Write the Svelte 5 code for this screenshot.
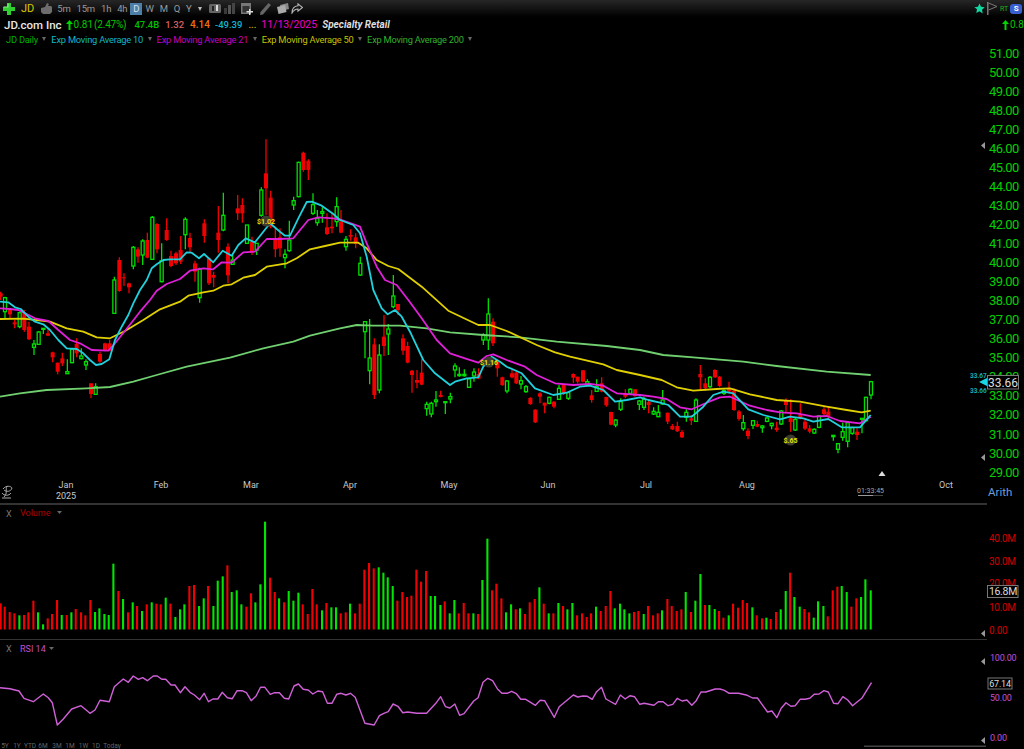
<script>
  const G = 'g';
  const R = 'r';

  // rows are read off enlarged crops: [x, colour, wickTop, bodyTop, bodyBottom, wickBottom]
  const candlesA = [
    [2,R,485,490,500,510],[15,G,500,503,545,565],[30,R,535,540,553,565],[44,R,570,577,583,595],[59,G,545,548,590,595],
    [73,R,540,548,600,605],[87,R,575,590,628,630],[102,G,630,642,652,675],[116,G,603,606,643,645],[130,G,595,595,598,612],
    [144,R,598,610,617,618],[158,R,665,667,682,697],[173,R,698,698,725,733],[187,R,668,685,700,708],[202,G,688,725,731,731],
    [216,G,655,658,698,700],[230,R,625,642,670,682],[244,G,655,678,686,688],[258,G,688,695,705,720],[273,R,760,760,792,805],
    [287,G,760,770,793,795],[300,R,665,672,695,698],[315,R,638,640,662,664],[329,R,630,640,662,664],[343,G,440,450,550,552],
    [358,R,382,390,483,485],[372,R,430,442,445,468],[387,R,458,460,472,490],[400,G,348,352,408,418],[414,R,352,358,380,398],
    [428,G,328,333,375,405],[442,R,308,330,383,385],[457,G,258,262,388,390],[471,R,280,282,358,370],[485,G,340,392,455,457],
    [500,R,265,300,330,332],[513,R,362,378,408,412],[528,R,365,370,400,405],[542,R,318,360,395,402],[556,G,262,268,314,358],
    [570,R,308,324,352,368],[585,R,392,400,425,455],[599,G,413,418,503,518],[613,R,268,280,318,338],[627,R,385,385,460,465],
    [641,R,425,435,443,472],[655,R,228,308,330,368],[670,G,188,256,300,304],[684,R,340,350,436,460],[698,G,375,390,403,405],
    [713,R,195,235,250,270],[727,R,205,225,250,278],[741,G,285,285,340,342],[756,R,320,335,368,375],[770,G,340,340,360,375],
    [784,G,172,180,256,260],[798,R,28,130,175,255],[812,R,182,203,290,295],[826,R,295,325,358,382],[840,R,295,322,355,380],
    [855,G,358,373,383,415],[868,G,272,330,362,365],[881,G,200,212,225,240],[896,G,95,97,200,202],[910,R,65,68,120,125],
    [925,R,88,92,120,150],[939,G,190,224,250,255],[952,G,240,265,278,287],[967,G,232,245,250,278],[981,R,250,292,312,315],
    [996,R,248,290,295,310],[1010,G,202,230,275,290]
  ];
  const candlesB = [
    [3,R,-30,5,38,40],[18,G,48,58,80,92],[32,R,28,45,50,62],[47,R,40,52,72,85],[61,G,110,130,165,168],
    [75,G,303,305,335,415],[89,G,297,414,452,493],[103,R,355,373,525,537],[118,G,373,405,510,520],[132,R,285,350,378,408],
    [145,G,312,327,342,405],[160,G,165,228,260,265],[174,R,252,252,270,285],[189,R,343,355,392,405],[203,R,365,378,428,430],
    [216,R,450,452,465,518],[231,R,450,480,488,505],[245,R,418,458,494,496],[260,G,545,553,566,587],[274,G,545,550,582,592],
    [288,G,513,540,545,560],[302,R,512,525,531,532],[316,G,545,545,548,582],[331,G,518,530,537,550],[345,G,430,438,450,472],
    [358,G,442,463,467,470],[373,G,448,463,467,470],[387,G,475,477,502,503],[402,G,445,456,468,485],[416,R,445,462,476,478],
    [430,G,340,345,360,375],[445,G,235,282,360,390],[459,R,295,305,370,378],[472,R,425,425,445,470],[487,R,470,472,495,497],
    [501,G,480,483,513,520],[516,R,450,460,472,475],[529,R,455,458,490,492],[543,G,468,482,492,508],[558,G,495,500,515,518],
    [571,R,532,534,552,554],[586,R,568,569,607,609],[600,R,517,520,530,550],[614,R,548,548,557,580],[628,G,530,532,550,553],
    [642,R,544,545,560,565],[657,G,495,505,538,540],[671,R,493,495,520,525],[685,G,515,518,535,540],[700,R,460,462,473,490],
    [713,R,470,470,485,490],[729,R,450,451,485,487],[742,G,478,485,495,497],[755,R,510,526,540,548],[770,G,478,500,514,516],
    [785,R,472,490,515,517],[799,R,530,531,556,560],[813,R,575,576,614,616],[827,G,598,600,615,622],[842,G,535,545,568,573],
    [856,R,508,520,530,535],[871,G,505,508,520,525],[885,R,508,508,528,530],[898,G,540,543,553,570]
  ];
  const candlesC = [
    [72,G,140,148,172,180],[86,R,150,156,165,190],[101,G,172,184,192,195],[115,G,165,187,200,202],[128,G,120,150,162,165],
    [143,R,188,188,215,222],[157,R,222,228,238,240],[172,R,215,228,244,246],[186,R,240,246,262,264],[199,G,178,187,202,215],
    [214,R,195,205,212,225],[228,G,145,150,214,216],[241,R,45,72,82,122],[256,R,85,100,115,122],[270,G,78,82,110,115],
    [285,R,58,60,82,84],[299,R,78,80,108,112],[312,G,118,122,130,135],[327,R,95,115,125,130],[342,R,115,122,180,182],
    [357,R,180,184,207,212],[370,G,195,218,236,242],[384,R,235,242,258,268],[399,G,212,212,226,237],[412,R,212,222,230,232],
    [427,G,225,228,233,248],[441,G,200,204,214,217],[455,G,218,220,227,238],[470,R,215,233,240,245],[484,G,180,183,222,225],
    [498,R,145,150,165,190],[512,R,148,205,216,245],[526,G,205,208,240,243],[541,R,160,195,205,208],[555,R,210,215,236,240],
    [569,R,225,235,245,250],[583,G,235,238,249,252],[597,G,195,198,232,235],[612,R,170,178,192,195],[625,R,170,185,200,205],
    [640,G,255,256,260,272],[654,G,280,281,298,310],[668,G,218,245,262,272],[683,G,218,218,274,292],[697,G,230,233,250,254],
    [711,R,235,245,255,270],[726,G,205,205,208,250],[738,G,140,142,212,215],[753,G,92,95,135,148]
  ];

  function mapCandles(rows, ox, oy) {
    return rows.map(([x, color, wt, bt, bb, wb]) => ({
      x: ox + x / 3,
      color,
      wt: oy + wt / 3,
      bt: oy + bt / 3,
      bb: oy + bb / 3,
      wb: oy + wb / 3
    }));
  }

  const candles = [
    ...mapCandles(candlesA, 0, 130),
    ...mapCandles(candlesB, 340, 220),
    ...mapCandles(candlesC, 620, 350)
  ];

  // moving averages, same three crops
  function toPoints(sections) {
    return sections
      .map(([ox, oy, pts]) => pts.map(([x, y]) => `${(ox + x / 3).toFixed(1)},${(oy + y / 3).toFixed(1)}`).join(' '))
      .join(' ');
  }

  const ema10 = toPoints([
    [0, 130, [[0,515],[25,517],[45,532],[62,537],[85,560],[105,575],[130,583],[150,600],[175,630],[200,655],[230,657],[250,670],[270,690],[288,705],[305,702],[328,688],[345,630],[365,590],[385,555],[400,520],[420,480],[440,450],[455,415],[470,403],[490,390],[510,388],[540,388],[560,367],[575,368],[597,385],[612,372],[640,397],[668,362],[695,377],[715,345],[737,325],[765,337],[790,305],[810,280],[840,305],[855,317],[870,317],[895,265],[920,216],[935,215],[965,227],[1000,252]]],
    [340, 220, [[0,0],[40,15],[60,40],[80,110],[100,210],[125,265],[143,283],[165,270],[185,290],[210,335],[250,420],[285,460],[330,495],[345,485],[380,475],[415,472],[430,440],[455,410],[480,425],[500,440],[545,460],[585,505],[640,525],[680,518],[720,500],[750,497],[790,510],[825,545],[860,540],[900,532]]],
    [620, 350, [[85,150],[120,158],[145,165],[180,200],[215,200],[250,170],[280,135],[310,125],[340,130],[385,178],[430,195],[480,208],[510,200],[550,205],[580,215],[625,207],[665,232],[720,232],[752,195]]]
  ]);
  const ema21 = toPoints([
    [0, 130, [[0,535],[30,537],[55,540],[80,552],[105,565],[145,573],[175,600],[210,630],[240,640],[275,660],[325,662],[345,640],[385,590],[420,545],[450,510],[470,482],[500,462],[540,447],[570,422],[610,415],[640,418],[665,397],[695,398],[730,367],[765,365],[800,327],[840,327],[880,325],[925,270],[955,262],[1000,265]]],
    [340, 220, [[5,0],[60,20],[80,70],[110,140],[135,180],[170,195],[205,240],[245,295],[290,360],[330,400],[375,415],[415,428],[440,408],[460,403],[500,420],[555,440],[590,465],[645,490],[700,495],[750,492],[790,497],[830,520],[900,525]]],
    [620, 350, [[100,140],[140,147],[180,172],[215,178],[260,158],[300,142],[330,140],[390,167],[440,180],[480,187],[530,190],[580,200],[620,198],[660,213],[720,220],[752,200]]]
  ]);
  const ema50 = toPoints([
    [0, 130, [[0,567],[70,566],[110,570],[150,575],[200,595],[250,605],[290,622],[330,625],[375,603],[430,570],[480,538],[540,515],[565,497],[610,487],[640,482],[670,467],[695,463],[730,443],[765,435],[800,410],[860,400],[890,385],[930,358],[975,348]]],
    [340, 220, [[0,68],[55,68],[80,85],[110,120],[145,138],[175,147],[245,200],[325,272],[415,315],[450,315],[500,333],[590,375],[645,397],[690,410],[790,433],[830,450],[900,465]]],
    [620, 350, [[125,90],[170,112],[220,122],[290,117],[330,115],[390,133],[470,150],[540,155],[620,170],[680,180],[725,187],[752,182]]]
  ]);
  const ema200 = toPoints([
    [0, 130, [[0,800],[60,790],[140,780],[260,775],[330,771],[400,755],[470,735],[560,710],[690,683],[790,655],[880,635],[930,617]]],
    [340, 220, [[0,325],[50,315],[100,317],[180,317],[260,325],[330,337],[430,345],[540,352],[650,365],[800,378],[900,390]]],
    [620, 350, [[130,15],[220,22],[370,35],[470,48],[620,65],[752,75]]]
  ]);

  const volRows = [
    [0, [[2,265,R],[14,275,R],[29,291,R],[43,295,R],[58,301,G],[72,300,R],[85,292,R],[100,257,R],[114,292,G],[129,328,G],[143,310,R],[156,297,R],[171,255,R],[185,300,G],[200,300,R],[214,292,G],[227,282,R],[243,292,R],[256,301,R],[271,255,R],[285,291,G],[298,280,G],[313,297,G],[326,300,G],[340,146,G],[355,228,R],[369,252,G],[384,292,R],[398,262,G],[411,273,R],[426,288,G],[440,268,R],[455,262,G],[469,266,R],[482,268,R],[497,248,G],[511,266,R],[526,306,G],[540,283,G],[553,268,G],[568,213,R],[582,210,R],[597,273,G],[611,250,G],[624,213,R],[640,273,G],[653,197,G],[668,184,G],[682,151,R],[695,231,G],[710,226,G],[724,268,G],[739,275,R],[753,235,R],[766,262,G],[781,208,G],[795,20,G],[810,188,R],[824,231,R],[837,250,G],[852,262,R],[866,228,G],[880,257,G],[895,233,G],[908,268,R],[923,297,R],[937,222,R],[950,268,R],[966,286,G],[979,264,R],[994,277,G],[1008,277,G],[1022,295,R],[1037,292,R],[1050,266,G],[1065,295,R],[1079,266,R],[1093,164,R],[1107,144,R],[1121,160,R],[1136,157,G],[1150,173,G],[1163,187,G],[1178,213,G],[1192,257,R],[1207,231,R],[1221,246,R],[1234,242,R],[1249,164,R],[1263,200,R],[1278,168,R],[1292,243,G],[1305,243,G]]],
    [440, [[1,270,G],[14,259,R],[29,295,G],[43,255,G],[56,295,R],[71,264,R],[85,295,R],[100,295,G],[114,297,R],[127,195,G],[142,71,G],[156,226,R],[169,206,R],[184,250,R],[198,292,G],[213,268,G],[227,283,R],[240,280,G],[255,297,R],[269,262,R],[284,252,R],[298,217,G],[311,266,R],[326,295,G],[340,295,R],[355,264,G],[369,273,R],[382,283,G],[397,264,G],[411,301,R],[426,295,R],[440,306,R],[453,295,R],[468,275,G],[482,288,R],[497,273,R],[511,228,R],[524,280,G],[540,266,G],[553,283,G],[568,295,G],[582,291,R],[595,288,R],[611,297,G],[624,273,R],[639,301,R],[653,295,R],[666,286,G],[682,252,R],[695,273,R],[710,288,R],[724,283,R],[737,231,G],[753,291,R],[766,257,G],[781,177,G],[795,270,R],[808,270,G],[824,282,G],[837,288,R],[850,308,R],[866,301,G],[879,266,R],[894,278,R],[908,255,R],[921,264,R],[937,277,G],[950,301,R],[966,310,R],[979,308,G],[992,312,R],[1008,291,R],[1022,283,G],[1037,228,G],[1050,173,R],[1063,246,G],[1079,275,G],[1093,282,R],[1107,292,R],[1121,308,G],[1134,259,G],[1150,273,G],[1163,304,R],[1178,226,R],[1192,215,R],[1205,213,G],[1220,231,G],[1234,275,R],[1249,250,R],[1263,246,G],[1276,193,G],[1292,226,G]]]
  ];
  const volumes = volRows.flatMap(([ox, rows]) =>
    rows.map(([x, top, color]) => ({ x: ox + x / 3, top: 515 + top / 3, color }))
  );

  const rsiHead = [[0,173],[30,176],[57,183],[72,205],[100,215],[130,192],[145,203],[157,218],[172,285],[190,267],[215,237],[243,227],[270,250],[285,240],[300,211],[328,215],[343,170],[370,147],[385,157],[400,138],[415,148],[428,143],[442,152],[460,138],[472,138],[485,148],[497,148],[513,165],[525,165],[541,188],[555,170]]
    .map(([x, y]) => `${(x / 3).toFixed(1)},${(630 + y / 3).toFixed(1)}`);
  const rsiTail = [[0,82],[10,90],[22,104],[32,85],[42,110],[52,102],[63,102],[73,82],[85,98],[96,101],[107,77],[118,77],[128,83],[139,107],[150,93],[160,67],[170,67],[182,88],[192,83],[203,83],[214,100],[224,102],[236,63],[246,57],[257,73],[268,75],[279,87],[290,78],[301,80],[312,115],[322,115],[333,88],[343,85],[354,90],[364,85],[375,97],[397,175],[418,180],[430,152],[440,145],[450,140],[461,117],[472,124],[483,143],[494,141],[515,145],[537,145],[558,115],[569,95],[580,125],[590,129],[601,117],[612,151],[622,146],[644,108],[654,98],[665,52],[676,40],[687,47],[698,72],[708,85],[720,85],[730,79],[741,86],[751,103],[762,103],[784,121],[795,106],[805,107],[827,157],[838,125],[870,90],[880,96],[892,93],[902,94],[913,103],[923,80],[934,67],[944,102],[966,118],[977,90],[988,102],[999,92],[1009,95],[1021,118],[1031,115],[1053,121],[1063,110],[1074,110],[1085,122],[1096,118],[1106,100],[1117,108],[1128,105],[1139,121],[1149,107],[1160,81],[1171,81],[1192,72],[1203,72],[1213,76],[1224,85],[1245,85],[1265,91],[1277,99],[1288,99],[1311,141],[1321,138],[1332,158],[1342,130],[1353,113],[1364,124],[1374,122],[1385,103],[1396,103],[1407,100],[1417,88],[1428,87],[1439,77],[1449,81],[1461,115],[1471,116],[1482,95],[1493,105],[1504,122],[1515,110],[1525,100],[1547,53]]
    .map(([x, y]) => `${(190 + x / 2.27).toFixed(1)},${(665 + y / 3).toFixed(1)}`);
  const rsi = [...rsiHead, ...rsiTail].join(' ');

  const prices = Array.from({ length: 23 }, (_, i) => ({
    label: (51 - i).toFixed(2),
    y: 53 + i * 19.05
  }));
  const months = [['Jan', 66], ['Feb', 161], ['Mar', 251], ['Apr', 350], ['May', 449], ['Jun', 548], ['Jul', 646], ['Aug', 747], ['Oct', 946]];
  const earnings = [['$1.02', 266, 221], ['$1.16', 489, 362], ['$.65', 790.6, 440]];
  const volTicks = [['40.0M', 538], ['30.0M', 561], ['20.0M', 583], ['10.0M', 607], ['0.00', 630]];
  const rsiTicks = [['100.00', 657], ['50.00', 697], ['0.00', 737]];
  const ranges = [['5Y', 5], ['1Y', 17], ['YTD', 30], ['6M', 43], ['3M', 57], ['1M', 70], ['1W', 83.5], ['1D', 96], ['Today', 112]];
  const intervals = ['5m', '15m', '1h', '4h', 'D', 'W', 'M', 'Q', 'Y'];
  const legend = [
    ['JD Daily', 'daily'],
    ['Exp Moving Average 10', 'cyan'],
    ['Exp Moving Average 21', 'magenta'],
    ['Exp Moving Average 50', 'yellow'],
    ['Exp Moving Average 200', 'lime']
  ];
</script>

<div class="chart">
  <header class="head">
    <div class="toolbar">
      <svg class="plus" width="12" height="12" viewBox="0 0 12 12">
        <path d="M4 0h4v4h4v4H8v4H4V8H0V4h4z" fill="#2fd02f" />
        <path d="M4.5 .6h1v4h-5v-1h4z" fill="#8ef08e" />
      </svg>
      <span class="symbol">JD</span>
      <svg class="hand" width="12" height="11" viewBox="0 0 12 11">
        <path d="M1 5l4-1 2-4 2 1-1 2h3l1 1v5l-2 2H3L1 9z" fill="#6d6d6d" />
      </svg>
      <div class="intervals">
        {#each intervals as iv}
          <span class:active={iv === 'D'}>{iv}</span>
        {/each}
      </div>
      <i class="tri tri-light menu-tri"></i>
      <svg class="tool first" width="13" height="11" viewBox="0 0 13 11">
        <rect x="0" y="1" width="12" height="9" rx="1.5" fill="#666" />
        <rect x="3" y="3" width="2" height="5" fill="#222" />
        <rect x="7" y="2" width="2" height="6" fill="#ddd" />
      </svg>
      <svg class="tool" width="12" height="11" viewBox="0 0 12 11">
        <rect x="0" y="5" width="3" height="6" fill="#3a3a3a" />
        <rect x="4" y="2" width="3" height="9" fill="#555" />
        <rect x="8" y="0" width="3" height="11" fill="#444" />
      </svg>
      <svg class="tool cal" width="12" height="13" viewBox="0 0 12 13">
        <path d="M0 1h10v11H0z" fill="#777" />
        <path d="M1.5 4h7v6.500h-7z" fill="#333" />
        <path d="M8 7h1.500v2H12v1.500H9.500V13H8v-2.500H5.500V9H8z" fill="#ddd" />
      </svg>
      <svg class="tool pencil" width="11" height="12" viewBox="0 0 11 12">
        <path d="M8.500 0l2.500 2-8 9.500L0 12l.5-3z" fill="#666" />
      </svg>
      <svg class="tool notes" width="12" height="11" viewBox="0 0 12 11">
        <path d="M3 2l8-2 1 6-8 2z" fill="#888" />
        <path d="M0 4l8-2 1.500 7L1.500 11z" fill="#aaa" />
      </svg>
      <svg class="tool share" width="12" height="11" viewBox="0 0 12 11">
        <path d="M7 .8l4.500 3.700L7 8.200V6C4 6 2.500 7.500 1 10c0-4 2-7 6-7.300z" fill="none" stroke="#bbb" stroke-width="1.100" />
      </svg>
      <div class="status">
        <svg width="11" height="11" viewBox="0 0 24 24">
          <path d="M12 1l3.400 7.300 7.900 1-5.800 5.500 1.500 7.900L12 17.900l-7 3.800 1.500-7.900L.7 9.300l7.900-1z" fill="#10d8a0" />
        </svg>
        <svg class="flag" width="11" height="13" viewBox="0 0 11 13">
          <path d="M.8 0v13" stroke="#888" stroke-width="1.300" />
          <path d="M1.500 1l8.500 3.500-8.500 3.500" fill="none" stroke="#777" stroke-width="1" />
        </svg>
        <span class="rt">RT</span>
        <span class="badge">S</span>
      </div>
    </div>

    <div class="quote">
      <strong class="name">JD.com Inc</strong>
      <svg class="up" width="7" height="10" viewBox="0 0 7 10">
        <path d="M3.500 0L7 4H4.500v6h-2V4H0z" fill="#00d800" />
      </svg>
      <span class="change">0.81</span>
      <span class="change pct">(2.47%)</span>
      <span class="stat vol">47.4B</span>
      <span class="stat pe">1.32</span>
      <span class="stat orange">4.14</span>
      <span class="stat aqua">-49.39</span>
      <span class="stat dots">...</span>
      <span class="date">11/13/2025</span>
      <em class="sector">Specialty Retail</em>
      <div class="quote-right">
        <svg width="7" height="10" viewBox="0 0 7 10">
          <path d="M3.500 0L7 4H4.500v6h-2V4H0z" fill="#00d800" />
        </svg>
        <span class="change">0.8</span>
      </div>
    </div>

    <div class="legend">
      {#each legend as [label, tone]}
        <span class="item {tone}">{label}<i class="tri tri-dim"></i></span>
      {/each}
    </div>
  </header>

  <svg class="pane price" viewBox="0 46 1024 459" width="1024" height="459">
    {#each candles as c}
      <line x1={c.x} x2={c.x} y1={c.wt} y2={c.wb} class="wick {c.color}" />
      {#if c.color === G}
        <rect x={c.x - 1.5} y={c.bt} width="3" height={Math.max(c.bb - c.bt, 1)} class="hollow" />
      {:else}
        <rect x={c.x - 2} y={c.bt} width="4" height={Math.max(c.bb - c.bt, 1)} class="solid" />
      {/if}
    {/each}

    <polyline points={ema200} class="ma ma200" />
    <polyline points={ema50} class="ma ma50" />
    <polyline points={ema21} class="ma ma21" />
    <polyline points={ema10} class="ma ma10" />

    {#each earnings as [label, x, y]}
      <circle cx={x} cy={y} r="5.500" class="earn-bg" />
      <text {x} y={y + 2.5} class="earn">{label}</text>
    {/each}

    {#each prices as p}
      <text x="989" y={p.y + 4.5} class="axis green-axis">{p.label}</text>
    {/each}

    {#each months as [m, x]}
      <text {x} y="488" class="month">{m}</text>
    {/each}
    <text x="66" y="499" class="month">2025</text>

    <path d="M985 142v7l-4-3.500z" class="mark" />
    <path d="M985 454v7l-4-3.500z" class="mark" />
    <path d="M882 471l3.500 5h-7z" class="mark white" />

    <text x="870.500" y="493" class="month timer">01:33:45</text>
    <rect x="858" y="495" width="25" height="1" fill="#444" />
    <rect x="858" y="495" width="15" height="1" fill="#999" />

    <text x="970" y="377.500" class="small-cyan">33.67</text>
    <text x="970" y="393" class="small-cyan">33.66</text>
    <path d="M987 378v8l-8-4z" fill="#18d8e8" />
    <rect x="987.500" y="375.500" width="31" height="13.500" class="last" />
    <text x="1003" y="386.500" class="last-text">33.66</text>
    <text x="988" y="496" class="arith">Arith</text>

    <g class="swirl">
      <path d="M3 489c3-4 8-3 9-1-1 4-6 4-8 2M2 493c2 3 7 3 9 0" />
      <path d="M7 486c-2 4 1 7-3 11M2 498h9" />
    </g>

    <rect x="0" y="503" width="987" height="2" fill="#333" />
  </svg>

  <svg class="pane" viewBox="0 505 1024 134" width="1024" height="134">
    <text x="6" y="516.500" class="close-x">X</text>
    <text x="20" y="516" class="pane-title vol-title">Volume</text>
    <path d="M57 511h5l-2.500 3z" class="mark dim" />
    {#each volumes as v}
      <rect x={v.x - 1} y={v.top} width="2.100" height={629.5 - v.top} class="bar {v.color}" />
    {/each}
    {#each volTicks as [label, y]}
      <text x="989" y={y + 4} class="axis red-axis">{label}</text>
    {/each}
    <path d="M985 630v7l-4-3.500z" class="mark" />
    <rect x="987.500" y="585.500" width="30.500" height="12" class="last" />
    <text x="1003" y="595" class="last-text small">16.8M</text>
  </svg>

  <svg class="pane" viewBox="0 639 1024 110" width="1024" height="110">
    <rect x="0" y="638" width="987" height="2" fill="#333" />
    <text x="6" y="651.500" class="close-x">X</text>
    <text x="20" y="652" class="pane-title rsi-title">RSI 14</text>
    <path d="M49 647h5l-2.500 3z" class="mark dim" />
    <polyline points={rsi} class="rsi" />
    {#each rsiTicks as [label, y]}
      <text x="990" y={y + 3.5} class="axis rsi-axis">{label}</text>
    {/each}
    <rect x="988" y="678" width="24" height="11" class="last" />
    <text x="1000" y="686.500" class="last-text tiny">67.14</text>
    <path d="M985 658v7l-4-3.500z" class="mark" />
    <path d="M985 737v7l-4-3.500z" class="mark" />
    {#each ranges as [label, x]}
      <text {x} y="748" class="range">{label}</text>
    {/each}
    <rect x="864" y="745.500" width="122" height="1.500" fill="#444" />
  </svg>
</div>

<style>
  :global(body) {
    background: #000;
  }

  .chart {
    width: 1024px;
    height: 749px;
    overflow: hidden;
    background: #000;
    font-family: Roboto, "Noto Sans", sans-serif;
    display: flex;
    flex-direction: column;
  }

  .head {
    height: 46px;
    flex: none;
    background: linear-gradient(#262626, #000 17px);
    white-space: nowrap;
  }

  .head svg {
    flex: none;
  }

  .pane {
    display: block;
    flex: none;
  }

  .toolbar {
    height: 17px;
    padding-left: 3px;
    display: flex;
    align-items: center;
    font-size: 10px;
    color: #9a9a9a;
    box-sizing: border-box;
  }

  .symbol {
    color: #d8c800;
    font-size: 11px;
    margin-left: 6px;
  }

  .hand {
    margin-left: 6px;
  }

  .intervals {
    display: flex;
    gap: 6px;
    margin-left: 5px;
    font-size: 9.500px;
    letter-spacing: -0.200px;
  }

  .intervals span {
    line-height: 12px;
  }

  .intervals .active {
    background: #4d7fa8;
    color: #cfe0ee;
    padding: 0 3px;
    margin: 0 -3px;
  }

  .menu-tri {
    margin-left: 6px;
  }

  .tool {
    margin-left: 2px;
  }

  .tool.first {
    margin-left: 7px;
  }

  .tool.cal {
    margin-left: 5px;
  }

  .tool.pencil {
    margin-left: 7px;
  }

  .tool.notes {
    margin-left: 6px;
  }

  .status {
    margin-left: auto;
    display: flex;
    align-items: center;
    gap: 2px;
    width: 50px;
    box-sizing: border-box;
    overflow: hidden;
  }

  .rt {
    color: #20b020;
    font-size: 7px;
  }

  .badge {
    width: 12px;
    height: 10px;
    flex: none;
    background: #3a5fd0;
    border-radius: 3px;
    color: #fff;
    font-size: 8px;
    line-height: 10px;
    text-align: center;
    font-weight: 700;
  }

  .quote {
    height: 15px;
    display: flex;
    align-items: center;
    padding-left: 4px;
    font-size: 11px;
    color: #00c800;
  }

  .name {
    color: #e8e8e8;
    font-size: 11.500px;
    font-weight: 500;
  }

  .up {
    margin-left: 4px;
  }

  .change {
    color: #00c800;
    margin-left: 1px;
    font-size: 10px;
  }

  .pct {
    letter-spacing: -0.200px;
  }

  .stat {
    font-size: 9.500px;
    font-weight: 500;
    margin-left: 6px;
  }

  .vol {
    color: #00c000;
    margin-left: 8px;
  }

  .pe {
    color: #d86060;
  }

  .orange {
    color: #f07010;
    font-size: 10px;
  }

  .aqua {
    color: #10b8d0;
    margin-left: 5px;
  }

  .dots {
    color: #c8b800;
  }

  .date {
    color: #f000c8;
    font-size: 10.500px;
    margin-left: 5px;
  }

  .sector {
    color: #ddd;
    font-size: 10px;
    font-weight: 700;
    margin-left: 5px;
  }

  .quote-right {
    margin-left: auto;
    width: 22px;
    flex: none;
    overflow: hidden;
    display: flex;
    align-items: center;
  }

  .legend {
    height: 14px;
    display: flex;
    align-items: center;
    gap: 5px;
    padding-left: 6px;
    font-size: 9.300px;
    letter-spacing: -0.220px;
  }

  .item {
    display: flex;
    align-items: center;
  }

  .daily { color: #00b000; }
  .cyan { color: #10b8c8; }
  .magenta { color: #c000c0; }
  .yellow { color: #c8c000; }
  .lime { color: #30b030; }

  .tri {
    display: inline-block;
    width: 0;
    height: 0;
    border-left: 2.500px solid transparent;
    border-right: 2.500px solid transparent;
    border-top: 4px solid #666;
  }

  .tri-light {
    border-top-color: #bbb;
  }

  .tri-dim {
    margin-left: 4.500px;
  }

  .wick {
    stroke-width: 1.300;
  }

  .wick.g { stroke: #00e000; }
  .wick.r { stroke: #f00000; }

  .hollow {
    fill: #000;
    stroke: #00e000;
    stroke-width: 1.300;
  }

  .solid {
    fill: #f00000;
  }

  .bar.g { fill: #00e600; }
  .bar.r { fill: #f00000; }

  .ma {
    fill: none;
    stroke-width: 1.800;
    stroke-linejoin: round;
  }

  .ma10 { stroke: #20d0dc; }
  .ma21 { stroke: #e020d8; }
  .ma50 { stroke: #e0d000; }
  .ma200 { stroke: #70d070; }

  .rsi {
    fill: none;
    stroke: #d060d8;
    stroke-width: 1.400;
    stroke-linejoin: round;
  }

  .earn-bg {
    fill: #3c3c30;
  }

  .earn {
    fill: #e8e000;
    font-size: 7px;
    font-weight: 700;
    text-anchor: middle;
  }

  .axis {
    font-size: 13px;
    letter-spacing: -0.600px;
  }

  .green-axis { fill: #00d000; }

  .red-axis {
    fill: #d00000;
    font-size: 10px;
    letter-spacing: -0.300px;
  }

  .rsi-axis {
    fill: #c050d8;
    font-size: 9px;
    letter-spacing: -0.200px;
  }

  .month {
    fill: #c8c8c8;
    font-size: 9px;
    text-anchor: middle;
  }

  .timer {
    fill: #aaa;
    font-size: 7px;
  }

  .mark {
    fill: #999;
  }

  .mark.white {
    fill: #ddd;
  }

  .mark.dim {
    fill: #666;
  }

  .small-cyan {
    fill: #10a8b8;
    font-size: 6.500px;
    font-weight: 700;
  }

  .last {
    fill: #000;
    stroke: #777;
    stroke-width: 1;
  }

  .last-text {
    fill: #ddd;
    font-size: 12px;
    text-anchor: middle;
  }

  .last-text.small {
    font-size: 10.500px;
    letter-spacing: -0.300px;
  }

  .last-text.tiny {
    font-size: 9px;
    letter-spacing: -0.200px;
  }

  .arith {
    fill: #6a9fd8;
    font-size: 11.500px;
  }

  .swirl {
    fill: none;
    stroke: #aaa;
    stroke-width: 1;
  }

  .close-x {
    fill: #777;
    font-size: 9px;
  }

  .pane-title {
    font-size: 9px;
  }

  .vol-title { fill: #b00000; }
  .rsi-title { fill: #c050d0; }

  .range {
    fill: #666;
    font-size: 6.500px;
    text-anchor: middle;
  }
</style>
